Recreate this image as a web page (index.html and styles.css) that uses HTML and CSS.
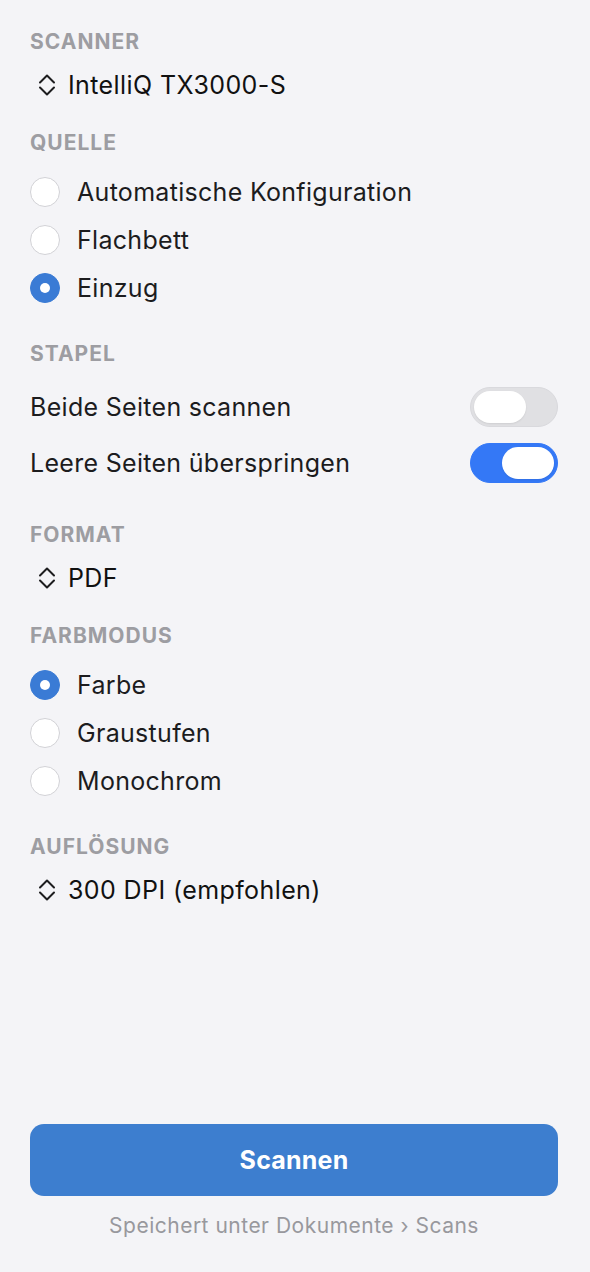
FILE: index.html
```html
<!DOCTYPE html>
<html lang="de">
<head>
<meta charset="utf-8">
<link rel="stylesheet" href="styles.css">
</head>
<body>
<div class="panel">
  <section class="section">
    <div class="label">SCANNER</div>
    <div class="picker">
      <svg class="chev" viewBox="0 0 18 24" width="18" height="24"><path d="M2 9.5 L9 2.5 L16 9.5 M2 14.5 L9 21.5 L16 14.5" fill="none" stroke="#1d1d1f" stroke-width="2" stroke-linecap="round" stroke-linejoin="round"/></svg>
      <span>IntelliQ TX3000-S</span>
    </div>
  </section>
  <section class="section">
    <div class="label">QUELLE</div>
    <div class="radios">
      <div class="radio"><span class="dot"></span><span>Automatische Konfiguration</span></div>
      <div class="radio"><span class="dot"></span><span>Flachbett</span></div>
      <div class="radio"><span class="dot on"></span><span>Einzug</span></div>
    </div>
  </section>
  <section class="section">
    <div class="label">STAPEL</div>
    <div class="toggles">
      <div class="toggle-row"><span>Beide Seiten scannen</span><span class="switch"><span class="knob"></span></span></div>
      <div class="toggle-row"><span>Leere Seiten überspringen</span><span class="switch on"><span class="knob"></span></span></div>
    </div>
  </section>
  <section class="section">
    <div class="label">FORMAT</div>
    <div class="picker">
      <svg class="chev" viewBox="0 0 18 24" width="18" height="24"><path d="M2 9.5 L9 2.5 L16 9.5 M2 14.5 L9 21.5 L16 14.5" fill="none" stroke="#1d1d1f" stroke-width="2" stroke-linecap="round" stroke-linejoin="round"/></svg>
      <span>PDF</span>
    </div>
  </section>
  <section class="section">
    <div class="label">FARBMODUS</div>
    <div class="radios">
      <div class="radio"><span class="dot on"></span><span>Farbe</span></div>
      <div class="radio"><span class="dot"></span><span>Graustufen</span></div>
      <div class="radio"><span class="dot"></span><span>Monochrom</span></div>
    </div>
  </section>
  <section class="section">
    <div class="label">AUFLÖSUNG</div>
    <div class="picker">
      <svg class="chev" viewBox="0 0 18 24" width="18" height="24"><path d="M2 9.5 L9 2.5 L16 9.5 M2 14.5 L9 21.5 L16 14.5" fill="none" stroke="#1d1d1f" stroke-width="2" stroke-linecap="round" stroke-linejoin="round"/></svg>
      <span>300 DPI (empfohlen)</span>
    </div>
  </section>
  <div class="footer">
    <button class="scan">Scannen</button>
    <div class="hint">Speichert unter Dokumente › Scans</div>
  </div>
</div>
</body>
</html>
```
FILE: styles.css
```css
html, body {
  margin: 0;
  padding: 0;
  background: #f4f4f7;
}
body {
  font-family: Inter, "Noto Sans", "Liberation Sans", sans-serif;
  color: #1c1c1e;
}
.panel {
  box-sizing: border-box;
  height: 1272px;
  padding: 30px 32px 34px 30px;
  display: flex;
  flex-direction: column;
  gap: 30px;
}
.label {
  font-size: 21px;
  line-height: 24px;
  font-weight: 700;
  color: #9d9da2;
  letter-spacing: 1px;
  margin-bottom: 15px;
}
.picker {
  display: flex;
  align-items: center;
  gap: 12px;
  padding-left: 8px;
  height: 32px;
  font-size: 25px;
  letter-spacing: 0.4px;
  color: #111;
}
.chev { display: block; }
.radios {
  display: flex;
  flex-direction: column;
  margin-top: -2px;
}
.radio {
  height: 48px;
  display: flex;
  align-items: center;
  gap: 17px;
  font-size: 25px;
  letter-spacing: 0.3px;
}
.dot {
  box-sizing: border-box;
  flex: none;
  width: 30px;
  height: 30px;
  border-radius: 50%;
  background: #fff;
  border: 1px solid #d2d2d6;
  display: flex;
  align-items: center;
  justify-content: center;
}
.dot.on {
  background: #3a7bd5;
  border-color: #3a7bd5;
}
.dot.on::after {
  content: "";
  width: 10px;
  height: 10px;
  border-radius: 50%;
  background: #fff;
}
.toggles {
  display: flex;
  flex-direction: column;
  margin-top: -2px;
  margin-bottom: 2px;
}
.toggle-row {
  height: 56px;
  display: flex;
  align-items: center;
  justify-content: space-between;
  font-size: 25px;
  letter-spacing: 0.3px;
}
.switch {
  box-sizing: border-box;
  width: 88px;
  height: 40px;
  border-radius: 20px;
  background: #e0e0e3;
  border: 1px solid #d9d9dd;
  padding: 3px;
  display: flex;
  justify-content: flex-start;
}
.switch.on {
  background: #3478f6;
  border-color: #3478f6;
  justify-content: flex-end;
}
.knob {
  width: 52px;
  height: 32px;
  border-radius: 16px;
  background: #fff;
  box-shadow: 0 1px 2px rgba(0,0,0,0.08);
}
.footer {
  margin-top: auto;
  display: flex;
  flex-direction: column;
  align-items: center;
  gap: 18px;
}
.scan {
  width: 100%;
  height: 72px;
  border: none;
  border-radius: 14px;
  background: #3d7ecf;
  color: #fff;
  font-family: inherit;
  font-size: 25px;
  font-weight: 700;
  letter-spacing: 0.2px;
}
.hint {
  font-size: 21px;
  line-height: 24px;
  letter-spacing: 0.5px;
  color: #98989d;
}
```
